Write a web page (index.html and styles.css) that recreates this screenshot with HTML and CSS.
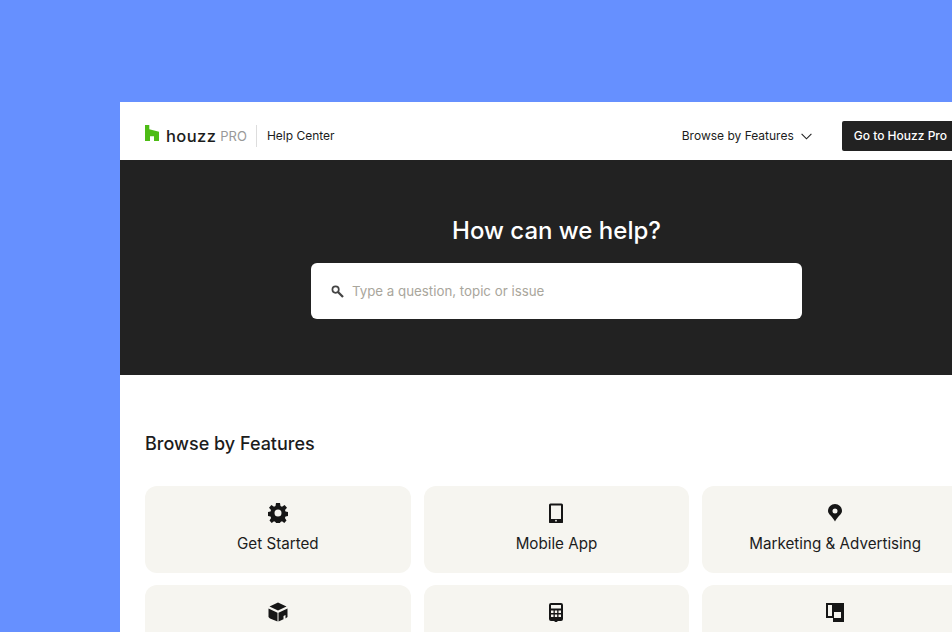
FILE: index.html
```html
<!DOCTYPE html>
<html lang="en">
<head>
  <meta charset="UTF-8">
  <title>Houzz Pro Help Center</title>
  <link rel="stylesheet" href="styles.css">
</head>
<body>
  <div class="window">
    <div class="nav">
      <div class="brand">
        <svg class="logo-mark" width="14" height="16" viewBox="0 0 14 16"><path fill="#4dbc15" d="M0 0h4.300v4.200L14 6.800V16H9v-4.800H5V16H0z"/></svg>
        <span class="logo-word">houzz</span>
        <span class="logo-pro">PRO</span>
        <span class="divider"></span>
        <span class="help">Help Center</span>
      </div>
      <div class="nav-right">
        <span class="browse">Browse by Features</span>
        <svg class="chevron" width="11" height="7" viewBox="0 0 11 7"><path fill="none" stroke="#222" stroke-width="1.1" d="M.6.8l4.9 5 4.9-5"/></svg>
        <span class="go-btn">Go to Houzz Pro</span>
      </div>
    </div>

    <div class="hero">
      <h1>How can we help?</h1>
      <div class="search">
        <svg width="13" height="13" viewBox="0 0 13 13"><circle cx="4.600" cy="4.600" r="3.200" fill="none" stroke="#444" stroke-width="1.700"/><path stroke="#444" stroke-width="2.300" d="M7 7l5 5"/></svg>
        <span class="placeholder">Type a question, topic or issue</span>
      </div>
    </div>

    <div class="features">
      <h2>Browse by Features</h2>
      <div class="grid">
        <div class="card">
          <svg width="20" height="20" viewBox="0 0 20 20"><path fill-rule="evenodd" d="M8 0h4l.5 3 1.500.7L16.600 2 19 4.700l-2 2.300.5 1.500 2.500.6v3.800l-2.500.6-.6 1.500 1.600 2.400L16.300 20l-2.300-1.700-1.500.6-.5 1.100H8l-.5-1.100-1.500-.6L3.700 20 1.500 17.500l1.600-2.400-.6-1.500L0 13V9.100l2.500-.6.500-1.500-2-2.300L3.400 2 6 3.700 7.500 3zM10 6.500a3.500 3.500 0 1 0 0 7 3.500 3.500 0 0 0 0-7z"/></svg>
          <span>Get Started</span>
        </div>
        <div class="card">
          <svg width="20" height="20" viewBox="0 0 20 20"><path fill-rule="evenodd" d="M4.500 0.500h11A1.500 1.500 0 0 1 17 2v17a1 1 0 0 1-1.500 1h-11A1 1 0 0 1 3 19V2a1.500 1.500 0 0 1 1.500-1.500zM5 2.500V16h10V2.500zm5 14.300a.9.9 0 1 0 0 1.800.9.9 0 0 0 0-1.800z"/></svg>
          <span>Mobile App</span>
        </div>
        <div class="card">
          <svg width="20" height="20" viewBox="0 0 20 20"><path fill-rule="evenodd" d="M10 1a7 7 0 0 1 7 7c0 3.200-4.500 5.500-7 10.500C7.500 13.500 3 11.200 3 8a7 7 0 0 1 7-7zm0 4.500a2.500 2.500 0 1 0 0 5 2.500 2.500 0 0 0 0-5z"/></svg>
          <span>Marketing &amp; Advertising</span>
        </div>
        <div class="card">
          <svg width="20" height="20" viewBox="0 0 20 20"><path fill-rule="evenodd" d="M10 .5l8.500 4-8.500 4-8.500-4zM.5 6.500l9 4.200v8.800L2 16.500.5 15zM10.500 10.700l9-4.200V15l-2 1.500v-3.500l-2 1v3.200l-5 2.300z"/></svg>
        </div>
        <div class="card">
          <svg width="20" height="20" viewBox="0 0 20 20"><path fill-rule="evenodd" d="M5 1h10a2 2 0 0 1 2 2v14a2 2 0 0 1-2 2h-3l-2 1.500L8 19H5a2 2 0 0 1-2-2V3a2 2 0 0 1 2-2zm0 2v3.500h10V3zm0 5.500V11h2.500V8.500zm3.800 0V11h2.400V8.500zm3.700 0V11H15V8.500zM5 12.500V15h2.500v-2.500zm3.800 0V15h2.400v-2.500zm3.700 0V15H15v-2.500z"/></svg>
        </div>
        <div class="card">
          <svg width="20" height="20" viewBox="0 0 20 20"><path fill-rule="evenodd" d="M1 1h18v19H8v-4H1zm2 2v11h4V3zm6 7v6h7v-6z"/></svg>
        </div>
      </div>
    </div>
  </div>
</body>
</html>
```

FILE: styles.css
```css
html, body {
  height: 100%;
}
body {
  margin: 0;
  padding: 102px 0 0 120px;
  box-sizing: border-box;
  background: #6690ff;
  font-family: Inter, "Liberation Sans", sans-serif;
  color: #1c1c1c;
  overflow: hidden;
}
.window {
  width: 873px;
  background: #fff;
}
.nav {
  height: 58px;
  box-sizing: border-box;
  padding: 9px 34px 0 25px;
  display: flex;
  align-items: center;
  justify-content: space-between;
}
.brand, .nav-right {
  display: flex;
  align-items: center;
}
.logo-mark {
  margin: -5px 7px 0 0;
}
.logo-word {
  font-size: 16.5px;
  font-weight: 500;
  letter-spacing: 0.4px;
}
.logo-pro {
  font-size: 13px;
  color: #999;
  margin-left: 4px;
}
.divider {
  width: 1px;
  height: 22px;
  background: #ddd;
  margin: 0 10px 0 9px;
}
.help, .browse {
  font-size: 12px;
}
.chevron {
  margin: 1px 30px 0 7px;
}
.go-btn {
  background: #222;
  color: #fff;
  font-size: 12px;
  font-weight: 500;
  height: 30px;
  line-height: 30px;
  padding: 0 12px;
  border-radius: 2px;
}
.hero {
  height: 215px;
  box-sizing: border-box;
  padding-top: 56px;
  background: #222;
  display: flex;
  flex-direction: column;
  align-items: center;
}
.hero h1 {
  margin: 0 0 17px;
  font-size: 24px;
  line-height: 30px;
  font-weight: 500;
  color: #fff;
}
.search {
  width: 491px;
  height: 56px;
  box-sizing: border-box;
  padding: 0 20px;
  background: #fff;
  border-radius: 6px;
  display: flex;
  align-items: center;
  gap: 8px;
}
.placeholder {
  font-size: 13.3px;
  color: #a9a69c;
}
.features {
  padding: 56px 25px 0;
}
.features h2 {
  margin: 0 0 29px;
  font-size: 18px;
  line-height: 26px;
  font-weight: 450;
}
.grid {
  display: grid;
  grid-template-columns: repeat(3, 1fr);
  gap: 12px 13px;
}
.card {
  height: 87px;
  box-sizing: border-box;
  padding-top: 17px;
  background: #f6f5f0;
  border-radius: 12px;
  display: flex;
  flex-direction: column;
  align-items: center;
  gap: 11px;
  font-size: 15.2px;
}
.card svg {
  fill: #161616;
}
```
